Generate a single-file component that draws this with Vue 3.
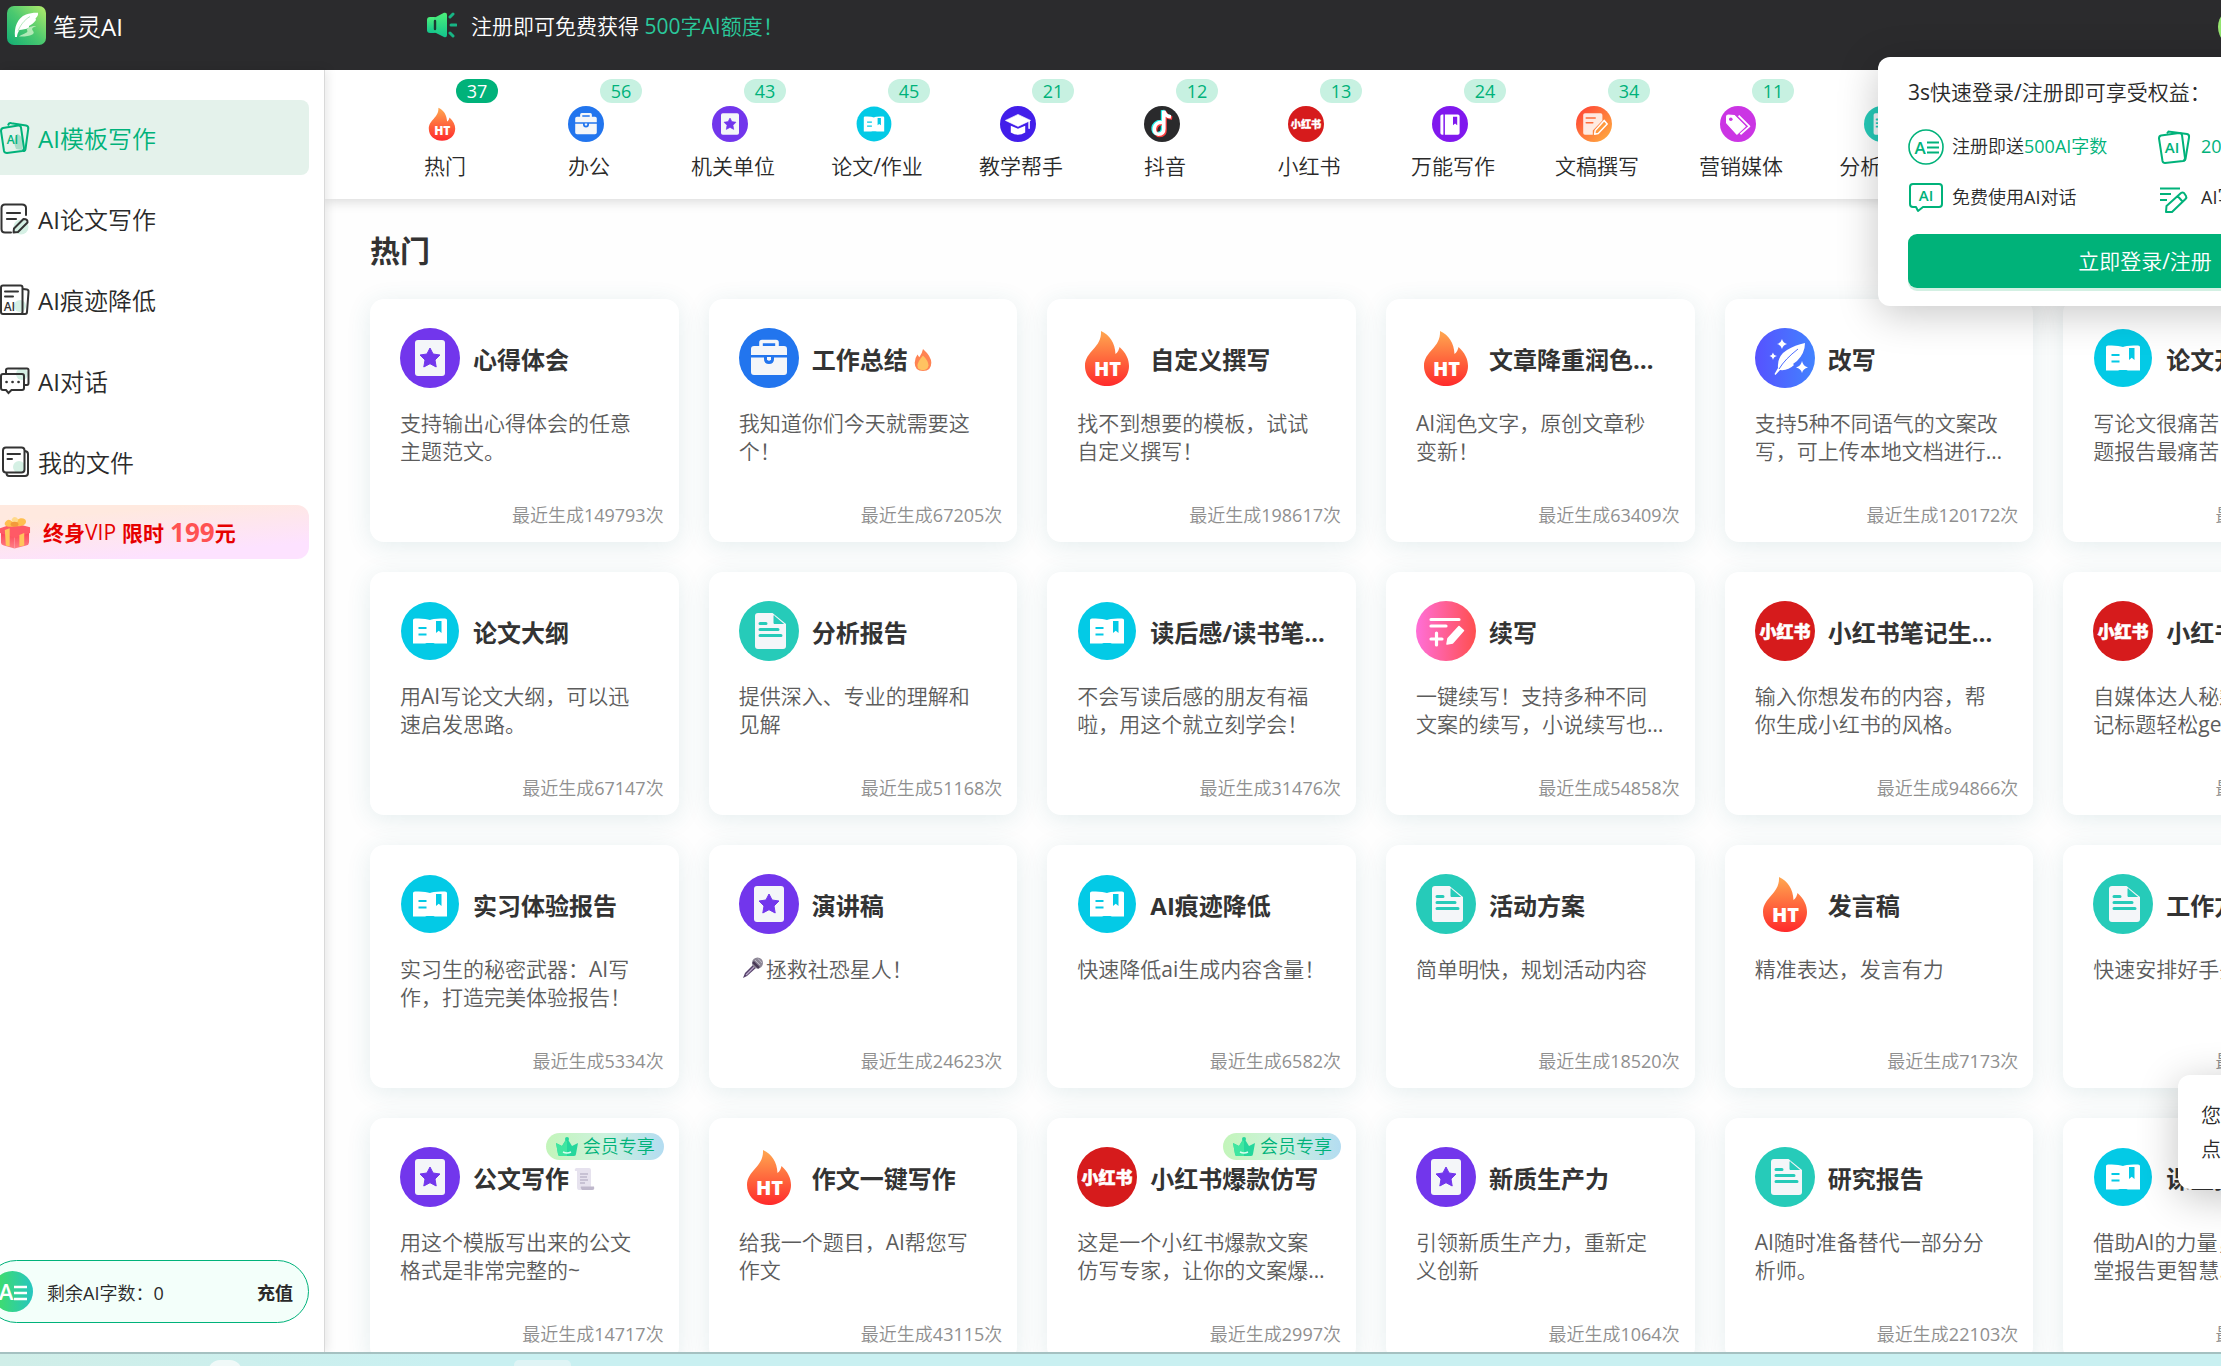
<script setup>
const menu = [
  { label: 'AI模板写作', icon: 'm-cards', active: true },
  { label: 'AI论文写作', icon: 'm-paper' },
  { label: 'AI痕迹降低', icon: 'm-trace' },
  { label: 'AI对话', icon: 'm-chat' },
  { label: '我的文件', icon: 'm-files' },
]

const categories = [
  { label: '热门', icon: 'fire', count: 37, active: true },
  { label: '办公', icon: 'case', count: 56 },
  { label: '机关单位', icon: 'star', count: 43 },
  { label: '论文/作业', icon: 'book', count: 45 },
  { label: '教学帮手', icon: 'cap', count: 21 },
  { label: '抖音', icon: 'douyin', count: 12 },
  { label: '小红书', icon: 'xhs', count: 13 },
  { label: '万能写作', icon: 'notebook', count: 24 },
  { label: '文稿撰写', icon: 'draft', count: 34 },
  { label: '营销媒体', icon: 'tag', count: 11 },
  { label: '分析/报告', icon: 'report', count: 15 },
]

const cards = [
  { icon: 'star', title: '心得体会', desc: '支持输出心得体会的任意主题范文。', count: 149793 },
  { icon: 'case', title: '工作总结', emoji: 'e-fire', desc: '我知道你们今天就需要这个！', count: 67205 },
  { icon: 'fire', title: '自定义撰写', desc: '找不到想要的模板，试试自定义撰写！', count: 198617 },
  { icon: 'fire', title: '文章降重润色…', desc: 'AI润色文字，原创文章秒变新！', count: 63409 },
  { icon: 'feather', title: '改写', desc: '支持5种不同语气的文案改写，可上传本地文档进行…', count: 120172 },
  { icon: 'book', title: '论文开题报告', desc: '写论文很痛苦，尤其是开题报告最痛苦，', count: 58214 },

  { icon: 'book', title: '论文大纲', desc: '用AI写论文大纲，可以迅速启发思路。', count: 67147 },
  { icon: 'report', title: '分析报告', desc: '提供深入、专业的理解和见解', count: 51168 },
  { icon: 'book', title: '读后感/读书笔…', desc: '不会写读后感的朋友有福啦，用这个就立刻学会！', count: 31476 },
  { icon: 'continue', title: '续写', desc: '一键续写！支持多种不同文案的续写，小说续写也…', count: 54858 },
  { icon: 'xhs', title: '小红书笔记生…', desc: '输入你想发布的内容，帮你生成小红书的风格。', count: 94866 },
  { icon: 'xhs', title: '小红书标题', desc: '自媒体达人秘籍，爆款笔记标题轻松get！', count: 40871 },

  { icon: 'book', title: '实习体验报告', desc: '实习生的秘密武器：AI写作，打造完美体验报告！', count: 5334 },
  { icon: 'star', title: '演讲稿', mic: true, desc: '拯救社恐星人！', count: 24623 },
  { icon: 'book', title: 'AI痕迹降低', desc: '快速降低ai生成内容含量！', count: 6582 },
  { icon: 'report', title: '活动方案', desc: '简单明快，规划活动内容', count: 18520 },
  { icon: 'fire', title: '发言稿', desc: '精准表达，发言有力', count: 7173 },
  { icon: 'report', title: '工作方案', desc: '快速安排好手头工作', count: 20416 },

  { icon: 'star', title: '公文写作', emoji: 'e-scroll', vip: true, desc: '用这个模版写出来的公文格式是非常完整的~', count: 14717 },
  { icon: 'fire', title: '作文一键写作', desc: '给我一个题目，AI帮您写作文', count: 43115 },
  { icon: 'xhs', title: '小红书爆款仿写', vip: true, desc: '这是一个小红书爆款文案仿写专家，让你的文案爆…', count: 2997 },
  { icon: 'star', title: '新质生产力', desc: '引领新质生产力，重新定义创新', count: 1064 },
  { icon: 'report', title: '研究报告', desc: 'AI随时准备替代一部分分析师。', count: 22103 },
  { icon: 'book', title: '课堂报告', desc: '借助AI的力量，使你的课堂报告更智慧…', count: 16350 },
]
</script>

<template>
  <div class="page">
    <svg class="sprite" aria-hidden="true">
      <defs>
        <linearGradient id="g-logo" x1="0" y1="1" x2="1" y2="0">
          <stop offset="0" stop-color="#12ae74" /><stop offset=".5" stop-color="#4cc96f" /><stop offset="1" stop-color="#b4ec6b" />
        </linearGradient>
        <linearGradient id="g-fire" x1="0" y1="0" x2="0" y2="1">
          <stop offset="0" stop-color="#ffa850" /><stop offset="1" stop-color="#ff2a2b" />
        </linearGradient>
        <linearGradient id="g-feather"><stop offset="0" stop-color="#5652ff" /><stop offset="1" stop-color="#4283ff" /></linearGradient>
        <linearGradient id="g-cont"><stop offset="0" stop-color="#ff6fd8" /><stop offset="1" stop-color="#ff4f4f" /></linearGradient>
        <linearGradient id="g-draft" x1="0" y1="0" x2="1" y2="1"><stop offset="0" stop-color="#ff3b35" /><stop offset="1" stop-color="#ffb340" /></linearGradient>
        <linearGradient id="g-ae"><stop offset="0" stop-color="#43e05f" /><stop offset="1" stop-color="#26c6c0" /></linearGradient>
        <linearGradient id="g-horn" x1="0" y1="0" x2="0" y2="1"><stop offset="0" stop-color="#4cf07a" /><stop offset="1" stop-color="#12c48d" /></linearGradient>
        <linearGradient id="g-gift" x1="0" y1="0" x2="0" y2="1"><stop offset="0" stop-color="#fb3f52" /><stop offset="1" stop-color="#ff7f86" /></linearGradient>
      </defs>

      <symbol id="logo" viewBox="0 0 39 39">
        <rect width="39" height="39" rx="7" fill="url(#g-logo)" />
        <path d="M8 31C7 22 10 12 19 8.500C23 7 27 6.500 31 6.700C31.500 9 30 11 28.500 12.500L29 14C27 17 24 19 22 20L22 21.500C19 23.500 15 23.500 12.500 24C11 26 10 29 10 31Z" fill="#fff" />
        <path d="M11 25C13 20 17 14 23 10.500" fill="none" stroke="#7fd88d" stroke-width=".6" />
        <path d="M12 30.500C17 27 22 27 20 24C19 22 27 19 29 20.500C26 21 24 22.500 26 25C29 28 23 31 12 30.500Z" fill="#d6f5cf" opacity=".75" />
      </symbol>
      <symbol id="horn" viewBox="0 0 30 26">
        <rect x="0" y="5" width="10" height="16" rx="3" fill="url(#g-horn)" />
        <path d="M7 6L17 0.800Q20 0 20 3V23Q20 26 17 25L7 20Z" fill="url(#g-horn)" />
        <path d="M8 9V17" stroke="#1c3b33" stroke-width="2.400" stroke-linecap="round" />
        <path d="M23 5L26 2M24 13H29M23 21L26 24" stroke="#17b584" stroke-width="3" stroke-linecap="round" />
      </symbol>

      <symbol id="fire" viewBox="0 0 60 60">
        <path d="M24 3C33 7 38 15 38.500 26C41 24 42 21.500 42.500 19C49 25 52 31 52 38C52 50 42 58 30 58C18 58 8 50 8 38C8 23 25 20 24 3Z" fill="url(#g-fire)" />
        <text x="30.500" y="48" text-anchor="middle" font-size="20" font-weight="800" fill="#fff" class="ht">HT</text>
      </symbol>
      <symbol id="case" viewBox="0 0 60 60">
        <circle cx="30" cy="30" r="30" fill="#2275ee" />
        <path d="M22 19V14.500Q22 13.500 23 13.500H37Q38 13.500 38 14.500V19" fill="none" stroke="#f4f6f9" stroke-width="3.600" />
        <path d="M12 27V21Q12 18 15 18H45Q48 18 48 21V27ZM12 29.500H25V31Q25 36 30 36Q35 36 35 31V29.500H48V44Q48 47 45 47H15Q12 47 12 44Z" fill="#f4f6f9" />
        <path d="M28 29H32V31.500Q30 34 28 31.500Z" fill="#f4f6f9" />
      </symbol>
      <symbol id="star" viewBox="0 0 60 60">
        <circle cx="30" cy="30" r="30" fill="#7236ec" />
        <rect x="15" y="12" width="30" height="36" rx="3" fill="#f4f6f9" />
        <path d="M30 20L33.100 26L40 27L35 32L36.200 39L30 35.700L23.800 39L25 32L20 27L26.900 26Z" fill="#7236ec" stroke="#7236ec" stroke-linejoin="round" />
      </symbol>
      <symbol id="book" viewBox="0 0 60 60">
        <circle cx="30" cy="30" r="29" fill="#03cae6" />
        <path d="M13 19Q13 17.500 15 17.500Q25 17 30 19Q33 17 45 17.500Q47 17.500 47 19V42H13ZM13 40H47V42.500H35Q30 40.500 25 42.500H13Z" fill="#fff" />
        <path d="M18.500 27H26.500M18.500 33.500H26.500" stroke="#03cae6" stroke-width="2" />
        <path d="M36 20H41.500V32L38.700 29.800L36 32Z" fill="#03cae6" />
      </symbol>
      <symbol id="report" viewBox="0 0 60 60">
        <circle cx="30" cy="30" r="30" fill="#26cbb9" />
        <path d="M19 12H33.500L47 23V45Q47 48 44 48H19Q16 48 16 45V15Q16 12 19 12Z" fill="#f4f6f9" />
        <path d="M35 14.500V22.500H44.500" fill="#26cbb9" stroke="#26cbb9" />
        <path d="M21 22.500H27M21 28.500H39M21 34.500H42" stroke="#26cbb9" stroke-width="3" stroke-linecap="round" />
      </symbol>
      <symbol id="cap" viewBox="0 0 60 60">
        <circle cx="30" cy="30" r="30" fill="#421eea" />
        <path d="M30 14L51 24L30 34L9 24Z" fill="#fff" stroke="#fff" stroke-linejoin="round" />
        <path d="M18 33L30 38L42 33V44Q36 48 30 48Q24 48 18 44Z" fill="#fff" />
        <path d="M48.500 25V37" stroke="#fff" stroke-width="2.500" stroke-linecap="round" />
      </symbol>
      <symbol id="douyin" viewBox="0 0 60 60">
        <circle cx="30" cy="30" r="30" fill="#2a2a2c" />
        <g fill="none" stroke-width="6">
          <path d="M30 27C14 27 14 47 24 47Q33 47 33 38V8Q35 17 45 18" stroke="#25f4ee" transform="translate(-2 -1)" />
          <path d="M30 27C14 27 14 47 24 47Q33 47 33 38V8Q35 17 45 18" stroke="#fe4040" transform="translate(2 2)" />
          <path d="M30 27C14 27 14 47 24 47Q33 47 33 38V8Q35 17 45 18" stroke="#fff" />
        </g>
      </symbol>
      <symbol id="xhs" viewBox="0 0 60 60">
        <circle cx="30" cy="30" r="30" fill="#d61b1c" />
        <text x="30" y="36.500" text-anchor="middle" font-size="17" font-weight="900" fill="#fff" stroke="#fff" stroke-width=".5" class="xh">小红书</text>
      </symbol>
      <symbol id="notebook" viewBox="0 0 60 60">
        <circle cx="30" cy="30" r="30" fill="#8018ee" />
        <path d="M14 17Q14 14 17 14H19V48H17Q14 48 14 45ZM21.500 14H43Q46 14 46 17V45Q46 48 43 48H21.500Z" fill="#fff" />
        <path d="M35 18H42V32L38.500 29L35 32Z" fill="#8018ee" />
      </symbol>
      <symbol id="draft" viewBox="0 0 60 60">
        <circle cx="30" cy="30" r="30" fill="url(#g-draft)" />
        <path d="M15 12H41Q44 12 44 15V24L28 41V48H15Q12 48 12 45V15Q12 12 15 12Z" fill="#fff" opacity=".85" />
        <path d="M17 20H32M17 28H28" stroke="#ff6b38" stroke-width="2.500" stroke-linecap="round" />
        <path d="M47 24L52 30L37 46L31 47L32 41Z" fill="#ff9a3e" stroke="#fff" stroke-width="2.500" stroke-linejoin="round" />
      </symbol>
      <symbol id="tag" viewBox="0 0 60 60">
        <circle cx="30" cy="30" r="30" fill="#cb35e4" />
        <path d="M11 18Q11 15 14 15L24 16L42 34L28 47L11 28Z" fill="#fff" stroke="#fff" stroke-width="2" stroke-linejoin="round" />
        <path d="M31 16L49 34L34 47" fill="none" stroke="#fff" stroke-width="3" stroke-linejoin="round" />
        <circle cx="18" cy="22" r="3" fill="#cb35e4" />
      </symbol>
      <symbol id="feather" viewBox="0 0 60 60">
        <circle cx="30" cy="30" r="30" fill="url(#g-feather)" />
        <path d="M50 15Q50 25 42 33L38 36L39 37Q33 43 25 42L20.500 47L19.500 46L23 40Q22 28 32 22Q40 17 50 15Z" fill="#fff" />
        <path d="M24 41Q30 31 43 21" fill="none" stroke="#4d6cff" stroke-width="1" />
        <path d="M27 11Q28 15 32 16Q28 17 27 21Q26 17 22 16Q26 15 27 11ZM18 24.500Q18.600 27.500 22 28Q18.600 28.600 18 32Q17.400 28.600 14.500 28Q17.400 27.500 18 24.500ZM47 33Q48 38 53 39.500Q48 40.500 47 45Q46 40.500 41 39.500Q46 38 47 33Z" fill="#fff" />
      </symbol>
      <symbol id="continue" viewBox="0 0 60 60">
        <circle cx="30" cy="30" r="30" fill="url(#g-cont)" />
        <path d="M15 18.500H43M15 25H30M15 38H26M20.500 32V44" stroke="#fff" stroke-width="3.200" stroke-linecap="round" />
        <path d="M43 25.500L47.500 29.500L36.500 42L31 43L32 37.500Z" fill="#fff" stroke="#fff" stroke-width="1.500" stroke-linejoin="round" />
      </symbol>

      <symbol id="m-cards" viewBox="0 0 30 32">
        <path d="M17 12Q25 14 22 28L16 27Q12 18 17 12Z" fill="#a9dcc8" />
        <path d="M8 3.500L9 1.500Q10 .8 11.500 1.200L26 3.500Q28.500 4 28.300 6.500L25.500 27Q25 29.500 23 29" fill="none" stroke="#00b27a" stroke-width="2" />
        <path d="M3 6L18 3.500Q20.500 3.200 21 5.500L24 26Q24 28.500 22 29L7 31Q4.500 31 4 29L1 9Q1 6.500 3 6Z" fill="none" stroke="#00b27a" stroke-width="2" />
        <text x="12.500" y="21.500" text-anchor="middle" font-size="12" font-weight="600" fill="#00b27a">AI</text>
      </symbol>
      <symbol id="m-paper" viewBox="0 0 30 32">
        <circle cx="21" cy="24" r="7.500" fill="#d5f0e4" />
        <path d="M26 12V5Q26 1.500 22 1.500H5Q1.500 1.500 1.500 5V26Q1.500 29.500 5 29.500H11" fill="none" stroke="#333" stroke-width="2" stroke-linecap="round" />
        <path d="M7 10H20M7 16H16" stroke="#333" stroke-width="2.200" stroke-linecap="round" />
        <path d="M23.500 16Q28 16 27.500 19.500L18 29L13.500 29.500L14 25.500Z" fill="none" stroke="#333" stroke-width="2" stroke-linejoin="round" />
      </symbol>
      <symbol id="m-trace" viewBox="0 0 30 32">
        <circle cx="20" cy="22" r="6" fill="#d5f0e4" />
        <rect x="1" y="1.500" width="21.500" height="28.500" rx="2" fill="none" stroke="#333" stroke-width="2" />
        <path d="M23 5L27 5.500Q28.800 5.800 28.500 8L27 28Q27 30 25 30H21" fill="none" stroke="#333" stroke-width="2" />
        <path d="M5 7.500H18M5 12.500H13" stroke="#333" stroke-width="2" stroke-linecap="round" />
        <text x="9.500" y="26.500" text-anchor="middle" font-size="12" font-weight="600" fill="#333">AI</text>
      </symbol>
      <symbol id="m-chat" viewBox="0 0 30 32">
        <circle cx="22" cy="9" r="6" fill="#d5f0e4" />
        <path d="M6 8V5Q6 3.500 8 3.500H27Q28.500 3.500 28.500 5V18Q28.500 20 27 20H24" fill="none" stroke="#333" stroke-width="2" />
        <path d="M3 9H22Q24 9 24 11V23Q24 25 22 25H11.500L8.500 28L6 25H3Q1 25 1 23V11Q1 9 3 9Z" fill="none" stroke="#333" stroke-width="2" />
        <path d="M6.500 17H6.600M12.500 17H12.600M18.500 17H18.600" stroke="#333" stroke-width="2.600" stroke-linecap="round" />
      </symbol>
      <symbol id="m-files" viewBox="0 0 30 32">
        <circle cx="19" cy="21" r="6" fill="#d5f0e4" />
        <rect x="3" y="1.500" width="21.500" height="25" rx="3" fill="none" stroke="#333" stroke-width="2" />
        <path d="M25 5Q28 5.500 28 8V27Q28 30 25 30H9Q6.500 30 6.500 27" fill="none" stroke="#333" stroke-width="2" />
        <path d="M7.500 8H20M7.500 13H12" stroke="#333" stroke-width="2" stroke-linecap="round" />
      </symbol>

      <symbol id="gift" viewBox="0 0 32 34">
        <path d="M1 16L15 21V34L4 31Q1 30 1 28Z" fill="url(#g-gift)" /><path d="M30 16L15 21V34L27 31Q30 30 30 27Z" fill="url(#g-gift)" />
        <path d="M0 13L15 8L31 12V18L15 23L0 18Z" fill="#ff5a66" />
        <path d="M5 15L10 13V32L6 31ZM20 20L25 18V31L20 32Z" fill="#ffc65c" />
        <path d="M15 11C6 13 2 9 7 5C10 3 13 6 15 9C16 4 22 1 26 4C29 8 24 12 15 11Z" fill="#ffbf4f" />
        <path d="M12 4Q15 -1 19 4L17 9H13Z" fill="#ffd98c" /><ellipse cx="15" cy="9" rx="4" ry="2.500" fill="#f39a3b" />
      </symbol>
      <symbol id="ae" viewBox="0 0 41 41">
        <circle cx="20.500" cy="20.500" r="20.500" fill="url(#g-ae)" />
        <text x="14" y="29" text-anchor="middle" font-size="22" font-weight="600" fill="#fff">A</text>
        <path d="M22 16H35M22 22H35M22 28H35" stroke="#fff" stroke-width="2.600" />
      </symbol>
      <symbol id="crown" viewBox="0 0 22 20">
        <path d="M0 6L6 9L11 1L16 9L22 6L20 17Q20 19 18 19H4Q2 19 2 17Z" fill="#25d79c" />
        <path d="M0 6L6 9L11 1V19H4Q2 19 2 17Z" fill="#3fe6a0" /><circle cx="11" cy="2" r="2" fill="#25d79c" />
        <path d="M7 15Q11 17 15 15" fill="none" stroke="#d9fff0" stroke-width="1.500" />
      </symbol>
      <symbol id="e-fire" viewBox="0 0 20 26">
        <path d="M10 1Q19 9 19 16Q19 25 10 25Q1 25 1 16Q1 11 4 7Q5 9 6 10Q9 6 10 1Z" fill="#ff8353" />
        <path d="M10 8Q16 14 16 19Q15 24 10 24Q4 24 4 19Q4 15 10 8Z" fill="#ffc261" />
      </symbol>
      <symbol id="e-scroll" viewBox="0 0 22 24">
        <path d="M3 1H16Q18 1 18 3V20H20Q22 22 19 23H6Q4 23 4 20V4H2Q1 2 3 1Z" fill="#e6e2ee" />
        <path d="M9 23Q7 20 8 19.500H21Q22 23 19 23Z" fill="#bfb8cc" />
        <path d="M7 7H15M7 10H14M7 13H15M7 16H12" stroke="#a9a2ba" stroke-width="1" />
      </symbol>
      <symbol id="e-mic" viewBox="0 0 22 22">
        <path d="M1 21L3 16L12 7L15 10L5 19Z" fill="#55406a" /><path d="M4 18L12 10" stroke="#b9a9c9" stroke-width="1.200" />
        <circle cx="15.500" cy="6" r="5.500" fill="#8d8796" /><path d="M11 5L17 11" stroke="#4a3b58" stroke-width="2.500" />
        <path d="M13 3L18 8M16 1.500L20 6" stroke="#bdb8c6" stroke-width="1" />
      </symbol>

      <symbol id="p-ae" viewBox="0 0 36 36">
        <circle cx="18" cy="18" r="17" fill="none" stroke="#00b27a" stroke-width="1.600" />
        <text x="12" y="24.500" text-anchor="middle" font-size="17" font-weight="600" fill="#00b27a">A</text>
        <path d="M19 13.500H31M19 18.500H31M19 23.500H31" stroke="#00b27a" stroke-width="2" />
      </symbol>
      <symbol id="p-chat" viewBox="0 0 36 36">
        <path d="M5 4H31Q34 4 34 7V24Q34 27 31 27H15L10 31L8 27H5Q2 27 2 24V7Q2 4 5 4Z" fill="none" stroke="#00b27a" stroke-width="2" stroke-linejoin="round" />
        <text x="18" y="20.500" text-anchor="middle" font-size="15" font-weight="600" fill="#00b27a">AI</text>
      </symbol>
      <symbol id="p-cards" viewBox="0 0 36 36">
        <path d="M10 4.500L11.500 2.500L30 5Q32.500 5.500 32 8.500L28.500 30Q28 32 26.500 32" fill="none" stroke="#00b27a" stroke-width="2" />
        <path d="M4 6.500L22 4Q24.500 4 25 6L28 29Q28 31.500 26 32L8 34Q6 34 5.500 32L2 9.500Q2 7 4 6.500Z" fill="none" stroke="#00b27a" stroke-width="2" />
        <text x="15" y="24" text-anchor="middle" font-size="15" font-weight="600" fill="#00b27a">AI</text>
      </symbol>
      <symbol id="p-pen" viewBox="0 0 36 36">
        <path d="M3 8.500H23M3 14H14M3 20H10" stroke="#00b27a" stroke-width="2" />
        <path d="M24 13Q25.500 12 27 13L29 16Q30 17.500 28.500 19L15 32L9 32L9.500 26ZM21 16.500L25.500 21.500" fill="none" stroke="#00b27a" stroke-width="2" stroke-linejoin="round" />
      </symbol>
    </svg>

    <header class="topbar">
      <a class="brand" href="#"><svg class="logo"><use href="#logo" /></svg>笔灵AI</a>
      <p class="notice"><svg class="horn"><use href="#horn" /></svg>注册即可免费获得 <em>500字AI额度！</em></p>
      <span class="avatar"></span>
    </header>

    <div class="body">
      <aside class="sidebar">
        <nav class="menu">
          <a v-for="m in menu" :key="m.label" href="#" class="menu-item" :class="{ active: m.active }">
            <svg class="menu-icon"><use :href="'#' + m.icon" /></svg>{{ m.label }}
          </a>
          <a href="#" class="vip"><svg class="gift"><use href="#gift" /></svg><b>终身</b>VIP<b class="limit">限时</b><strong>199</strong><b>元</b></a>
        </nav>
        <div class="credits">
          <svg class="ae"><use href="#ae" /></svg>
          <span>剩余AI字数：0</span>
          <button type="button">充值</button>
        </div>
      </aside>

      <main class="main">
        <nav class="cats">
          <button v-for="c in categories" :key="c.label" type="button" class="cat" :class="{ active: c.active }">
            <span class="badge">{{ c.count }}</span>
            <svg class="cat-icon"><use :href="'#' + c.icon" /></svg>
            <span class="cat-label">{{ c.label }}</span>
          </button>
        </nav>
        <section class="section">
          <h2>热门</h2>
          <div class="grid">
            <a v-for="(c, i) in cards" :key="i" href="#" class="card">
              <span v-if="c.vip" class="vip-tag"><svg class="crown"><use href="#crown" /></svg>会员专享</span>
              <div class="card-head">
                <svg class="card-icon"><use :href="'#' + c.icon" /></svg>
                <h3>{{ c.title }}</h3>
                <svg v-if="c.emoji" class="emoji"><use :href="'#' + c.emoji" /></svg>
              </div>
              <p class="desc"><svg v-if="c.mic" class="mic"><use href="#e-mic" /></svg>{{ c.desc }}</p>
              <p class="count">最近生成{{ c.count }}次</p>
            </a>
          </div>
        </section>
      </main>
    </div>

    <footer class="taskbar"><span class="blob"></span><span class="tile"></span></footer>

    <div class="login">
      <h4><b>3s</b>快速登录/注册即可享受权益：</h4>
      <ul>
        <li><svg><use href="#p-ae" /></svg><span>注册即送<em>500AI字数</em></span></li>
        <li><svg><use href="#p-cards" /></svg><span><em>200+</em></span></li>
        <li><svg><use href="#p-chat" /></svg><span>免费使用AI对话</span></li>
        <li><svg><use href="#p-pen" /></svg><span>AI写作</span></li>
      </ul>
      <button type="button">立即登录/注册</button>
    </div>

    <div class="tip"><p>您</p><p>点</p></div>
  </div>
</template>

<style>
body { margin: 0; overflow: hidden; }
</style>

<style scoped>
.page {
  position: relative;
  display: flex;
  flex-direction: column;
  height: 100vh;
  overflow: hidden;
  background: #fff;
  color: #2a2a2a;
  font-family: "Open Sans", "Noto Sans CJK SC DemiLight", "Noto Sans CJK SC", sans-serif;
  font-size: 21px;
  font-weight: 400;
}
.sprite { position: absolute; width: 0; height: 0; }
.ht { font-family: "Open Sans", sans-serif; }
.xh { font-family: "Noto Sans CJK SC", sans-serif; }
p, h2, h3, h4, ul { margin: 0; padding: 0; }
a { color: inherit; text-decoration: none; }
button { border: 0; padding: 0; background: none; color: inherit; font: inherit; cursor: pointer; }
em { font-style: normal; color: #00b27a; }
b { font-weight: 700; }
h2, h3, b, strong, .credits button { font-family: "Open Sans", "Noto Sans CJK SC", sans-serif; }
svg { flex: none; }

.topbar {
  position: relative;
  flex: none;
  display: flex;
  align-items: center;
  box-sizing: border-box;
  height: 70px;
  padding: 0 0 20px 7px;
  background: #2b2b2d;
  color: #fff;
}
.brand { display: flex; align-items: center; gap: 7px; width: 420px; font-size: 24px; }
.logo { width: 39px; height: 39px; }
.notice { display: flex; align-items: center; white-space: pre; }
.notice em { color: #2ac99b; }
.horn { width: 30px; height: 26px; margin-right: 14px; }
.avatar {
  position: absolute;
  right: -37px;
  top: 7px;
  width: 40px;
  height: 40px;
  border-radius: 50%;
  background: linear-gradient(90deg, #9be86f, #12ae74);
}

.body { flex: 1; display: flex; min-height: 0; }
.sidebar {
  position: relative;
  z-index: 2;
  flex: none;
  display: flex;
  flex-direction: column;
  box-sizing: border-box;
  width: 325px;
  border-right: 1px solid #d9d9d9;
  background: #fff;
  box-shadow: 2px 0 10px rgba(0, 0, 0, .1);
}
.menu { display: flex; flex-direction: column; gap: 6px; padding: 30px 15px 0 0; }
.menu-item {
  display: flex;
  align-items: center;
  gap: 8px;
  height: 75px;
  border-radius: 0 8px 8px 0;
  font-size: 24px;
}
.menu-item.active { background: #e4f2eb; color: #00b27a; }
.menu-icon { width: 30px; height: 32px; }
.vip {
  display: flex;
  align-items: center;
  height: 54px;
  border-radius: 0 12px 12px 0;
  background: linear-gradient(175deg, #ffe9df 20%, #fde2ff 80%);
  color: #e60000;
}
.gift { width: 31px; height: 34px; margin-right: 12px; }
.limit { margin: 0 6px; }
.vip strong { color: #ff5252; font-size: 26px; }
.credits {
  display: flex;
  align-items: center;
  gap: 14px;
  box-sizing: border-box;
  height: 63px;
  margin: auto 15px 29px -15px;
  padding: 0 15px 0 6px;
  border: 1px solid #00b27a;
  border-radius: 32px;
  background: #f3fffa;
  font-size: 18px;
}
.ae { width: 41px; height: 41px; }
.credits button { margin-left: auto; font-weight: 700; }

.main { flex: 1; min-width: 0; overflow: hidden; background: #fefefe; }
.cats {
  position: relative;
  display: flex;
  padding-left: 48px;
  background: #fff;
  box-shadow: 0 2px 12px rgba(0, 0, 0, .16);
}
.cat {
  position: relative;
  flex: none;
  display: flex;
  flex-direction: column;
  align-items: center;
  width: 144px;
  padding: 36px 0 19px;
}
.cat-icon { width: 36px; height: 36px; margin: 0 6px 10px 0; }
.cat-label { line-height: 28px; }
.badge {
  position: absolute;
  left: 83px;
  top: 9px;
  width: 42px;
  border-radius: 12px;
  background: #c7f1e1;
  color: #00b27a;
  font-size: 18px;
  line-height: 24px;
  text-align: center;
}
.cat.active .badge { background: #00b27a; color: #fff; }

.section { padding: 32px 0 0 45px; }
.section h2 { margin-bottom: 28px; color: #333; font-size: 30px; line-height: 40px; font-weight: 700; }
.grid {
  display: grid;
  grid-template-columns: repeat(6, minmax(0, 1fr));
  grid-auto-rows: 243px;
  gap: 30px;
  margin-right: -151px;
}
.card {
  position: relative;
  display: flex;
  flex-direction: column;
  box-sizing: border-box;
  padding: 29px 30px 13px;
  border-radius: 14px;
  background: #fff;
  box-shadow: 0 4px 24px rgba(40, 115, 125, .12);
}
.card-head { display: flex; align-items: center; }
.card-icon { width: 60px; height: 60px; margin-right: 13px; }
.card h3 { padding-top: 3px; color: #333; font-size: 24px; line-height: 32px; font-weight: 700; white-space: nowrap; }
.emoji { width: 22px; height: 24px; margin: 3px 0 0 4px; }
.desc { margin-top: 21px; color: #5c5c5c; line-height: 28px; }
.mic { width: 22px; height: 22px; margin: 0 2px 0 3px; vertical-align: -2px; }
.count { margin: auto -15px 0 0; color: #8f8f8f; font-size: 18px; line-height: 28px; text-align: right; }
.vip-tag {
  position: absolute;
  right: 15px;
  top: 15px;
  display: flex;
  align-items: center;
  gap: 5px;
  padding: 0 9px 0 10px;
  border-radius: 14px;
  background: linear-gradient(90deg, #c3f5ba, #cdf2de 50%, #b3dcf1);
  color: #00b27a;
  font-size: 18px;
  line-height: 27px;
}
.crown { width: 22px; height: 20px; }

.taskbar {
  position: relative;
  z-index: 3;
  flex: none;
  display: flex;
  box-sizing: border-box;
  height: 14px;
  padding: 6px 0 0 208px;
  overflow: hidden;
  border-top: 2px solid #a5c1c1;
  background: linear-gradient(90deg, #d0eee8, #c9f0f1 20%, #c9f0f1);
}
.blob { width: 34px; height: 34px; border-radius: 12px; background: #f0f9f8; }
.tile { width: 57px; height: 34px; margin-left: 272px; border-radius: 5px; background: #dff4f5; }

.login {
  position: absolute;
  z-index: 4;
  right: -191px;
  top: 57px;
  box-sizing: border-box;
  width: 534px;
  padding: 19px 30px 18px;
  border-radius: 12px;
  background: #fff;
  box-shadow: 0 8px 40px rgba(0, 0, 0, .22);
}
.login h4 { font-size: 21px; line-height: 32px; font-weight: 400; }
.login h4 b { font-weight: 500; }
.login ul {
  display: grid;
  grid-template-columns: 1fr 1fr;
  gap: 15px 24px;
  margin: 21px 0 18px;
  list-style: none;
}
.login li { display: flex; align-items: center; gap: 8px; font-size: 18px; line-height: 24px; }
.login li svg { width: 36px; height: 36px; }
.login li span { padding-bottom: 2px; }
.login button {
  width: 100%;
  border-radius: 9px;
  background: #00b279;
  box-shadow: 0 3px 0 #d3f0e3;
  color: #fff;
  line-height: 54px;
}

.tip {
  position: absolute;
  z-index: 4;
  right: -191px;
  bottom: 177px;
  box-sizing: border-box;
  width: 234px;
  padding: 24px 23px 22px;
  border-radius: 12px;
  background: #fff;
  box-shadow: 0 8px 40px rgba(0, 0, 0, .24);
  font-size: 20px;
  line-height: 34px;
}
</style>
